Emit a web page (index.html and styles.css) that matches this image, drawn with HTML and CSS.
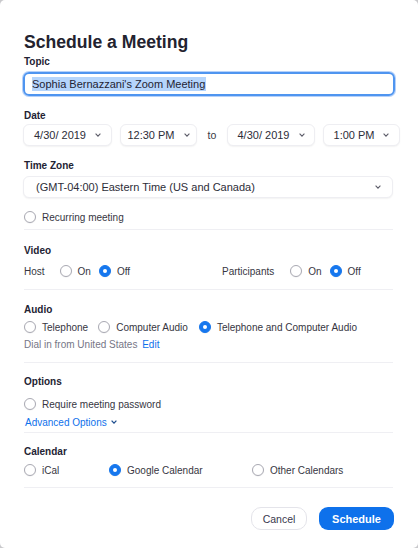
FILE: index.html
```html
<!DOCTYPE html>
<html>
<head>
<meta charset="utf-8">
<link rel="stylesheet" href="styles.css">
</head>
<body>
<div class="dialog">
  <h1 class="title">Schedule a Meeting</h1>

  <div class="label label-topic">Topic</div>
  <div class="text-input"><span class="selected">Sophia Bernazzani's Zoom Meeting</span></div>

  <div class="label label-date">Date</div>
  <div class="date-row">
    <div class="select w89"><span>4/30/ 2019</span><svg class="chev" width="6" height="4" viewBox="0 0 6 4"><path d="M0.6 0.7 L3 3.1 L5.4 0.7" /></svg></div>
    <div class="select w77"><span>12:30 PM</span><svg class="chev" width="6" height="4" viewBox="0 0 6 4"><path d="M0.6 0.7 L3 3.1 L5.4 0.7" /></svg></div>
    <div class="to">to</div>
    <div class="select w88"><span>4/30/ 2019</span><svg class="chev" width="6" height="4" viewBox="0 0 6 4"><path d="M0.6 0.7 L3 3.1 L5.4 0.7" /></svg></div>
    <div class="select w77"><span>1:00 PM</span><svg class="chev" width="6" height="4" viewBox="0 0 6 4"><path d="M0.6 0.7 L3 3.1 L5.4 0.7" /></svg></div>
  </div>

  <div class="label label-tz">Time Zone</div>
  <div class="select tz"><span>(GMT-04:00) Eastern Time (US and Canada)</span><svg class="chev" width="6" height="4" viewBox="0 0 6 4"><path d="M0.6 0.7 L3 3.1 L5.4 0.7" /></svg></div>

  <div class="row row-recurring"><span class="radio"></span><span class="opt-text">Recurring meeting</span></div>
  <div class="divider d1"></div>

  <div class="label label-video">Video</div>
  <div class="row video-row">
    <div class="vgroup">
      <span class="vlabel">Host</span>
      <span class="radio"></span><span class="opt-text">On</span>
      <span class="radio checked gap8"></span><span class="opt-text">Off</span>
    </div>
    <div class="vgroup">
      <span class="vlabel vlabel-wide">Participants</span>
      <span class="radio"></span><span class="opt-text">On</span>
      <span class="radio checked gap8"></span><span class="opt-text">Off</span>
    </div>
  </div>
  <div class="divider d2"></div>

  <div class="label label-audio">Audio</div>
  <div class="row audio-row">
    <span class="radio"></span><span class="opt-text">Telephone</span>
    <span class="radio gap10"></span><span class="opt-text">Computer Audio</span>
    <span class="radio checked gap11"></span><span class="opt-text">Telephone and Computer Audio</span>
  </div>
  <div class="dial">Dial in from United States <span class="link">Edit</span></div>
  <div class="divider d3"></div>

  <div class="label label-options">Options</div>
  <div class="row row-password"><span class="radio"></span><span class="opt-text">Require meeting password</span></div>
  <div class="advanced"><span class="link">Advanced Options</span><svg class="adv-chev" width="6" height="4" viewBox="0 0 6 4"><path d="M0.6 0.6 L3 3.1 L5.4 0.6" /></svg></div>
  <div class="divider d4"></div>

  <div class="label label-calendar">Calendar</div>
  <div class="row cal-row">
    <div class="cal-opt"><span class="radio"></span><span class="opt-text">iCal</span></div>
    <div class="cal-opt"><span class="radio checked"></span><span class="opt-text">Google Calendar</span></div>
    <div class="cal-opt"><span class="radio"></span><span class="opt-text">Other Calendars</span></div>
  </div>
  <div class="divider d5"></div>

  <div class="buttons">
    <button class="btn btn-cancel">Cancel</button>
    <button class="btn btn-primary">Schedule</button>
  </div>
</div>
</body>
</html>
```

FILE: styles.css
```css
html, body {
  margin: 0;
  padding: 0;
  background: #c9c9cc;
}

body {
  width: 418px;
  height: 548px;
  overflow: hidden;
  font-family: "Liberation Sans", Arial, Helvetica, sans-serif;
  color: #393945;
}

.dialog {
  box-sizing: border-box;
  width: 418px;
  height: 548px;
  background: #ffffff;
  border-radius: 5px;
  padding: 32px 25px 0 24px;
}

.title {
  margin: 0;
  font-size: 17.6px;
  line-height: 20px;
  font-weight: bold;
  color: #23232f;
}

.label {
  font-size: 10px;
  line-height: 12px;
  font-weight: bold;
  color: #232333;
}

.label-topic { margin-top: 4px; }
.label-date { margin-top: 14px; }
.label-tz { margin-top: 14px; }
.label-video { margin-top: 15px; }
.label-audio { margin-top: 14px; }
.label-options { margin-top: 13px; }
.label-calendar { margin-top: 13px; }

.text-input {
  box-sizing: border-box;
  margin: 4px -2px 0 -1px;
  height: 24px;
  border: 2px solid #4f95f0;
  border-radius: 6px;
  box-shadow: 0 0 0 1px rgba(120, 172, 245, 0.55);
  padding: 3px 0 0 7px;
  font-size: 11px;
  line-height: 14px;
  color: #232333;
}

.selected {
  display: inline-block;
  height: 14px;
  background: #b5d5fc;
  padding-right: 1px;
}

.date-row {
  display: flex;
  align-items: center;
  margin: 2px 0 0 -1px;
  height: 22px;
}

.select {
  box-sizing: border-box;
  height: 22px;
  display: flex;
  align-items: center;
  justify-content: center;
  gap: 9px;
  background: #fff;
  border: 1px solid #eeeef2;
  border-radius: 6px;
  box-shadow: 0 1px 1.5px rgba(0, 0, 0, 0.05);
  font-size: 11px;
  color: #2d2d38;
  white-space: nowrap;
}

.date-row > * { flex: none; }

.w89 { width: 89px; }
.w88 { width: 88px; }
.w77 { width: 77px; margin-left: 8px; }

.to {
  width: 30px;
  text-align: center;
  font-size: 10.5px;
  color: #393945;
}

.chev path {
  fill: none;
  stroke: #5c5c68;
  stroke-width: 1.1;
}

.select.tz {
  margin: 4px 0 0 -1px;
  justify-content: space-between;
  padding: 0 11px 0 12px;
}

.row {
  display: flex;
  align-items: center;
  height: 14px;
  font-size: 10px;
  color: #363642;
  white-space: nowrap;
}

.radio {
  box-sizing: border-box;
  width: 12px;
  height: 12px;
  border-radius: 50%;
  border: 1px solid #a9a9b3;
  background: #fff;
  flex: none;
  position: relative;
  box-shadow: 0 0.5px 1px rgba(0, 0, 0, 0.08);
}

.radio.checked {
  background: #1677ee;
  border-color: #1677ee;
}

.radio.checked::after {
  content: "";
  position: absolute;
  left: 3px;
  top: 3px;
  width: 4px;
  height: 4px;
  border-radius: 50%;
  background: #fff;
}

.opt-text {
  margin-left: 6px;
}

.gap8 { margin-left: 8px; }
.gap10 { margin-left: 10px; }
.gap11 { margin-left: 11px; }

.row-recurring { margin-top: 12px; }

.divider {
  height: 1px;
  background: #efeff3;
}

.d1 { margin-top: 5px; }
.d2 { margin-top: 11px; }
.d3 { margin-top: 11px; }
.d4 { margin-top: 4px; }
.d5 { margin-top: 10px; }

.video-row {
  margin-top: 7px;
  display: grid;
  grid-template-columns: 198px auto;
}

.vgroup {
  display: flex;
  align-items: center;
}

.vlabel {
  margin-right: 15px;
  font-size: 10px;
}

.vlabel-wide {
  margin-right: 16px;
}

.audio-row { margin-top: 4px; }

.dial {
  margin-top: 5px;
  font-size: 10px;
  line-height: 12px;
  color: #767686;
}

.link {
  color: #0e71eb;
  margin-left: 2px;
}

.row-password { margin-top: 9px; }

.advanced {
  margin-top: 5px;
  display: flex;
  align-items: center;
  height: 12px;
  font-size: 10px;
  padding-left: 1px;
}

.advanced .link { margin-left: 0; }

.adv-chev {
  margin-left: 4px;
}

.adv-chev path {
  fill: none;
  stroke: #1f4f8f;
  stroke-width: 1.3;
}

.cal-row {
  margin-top: 5px;
  display: grid;
  grid-template-columns: 85px 143px auto;
}

.cal-opt {
  display: flex;
  align-items: center;
}

.buttons {
  margin: 19px -1px 0 0;
  display: flex;
  justify-content: flex-end;
  gap: 12px;
}

.btn {
  box-sizing: border-box;
  height: 23px;
  font-family: "Liberation Sans", Arial, Helvetica, sans-serif;
  padding: 0;
  cursor: pointer;
}

.btn-cancel {
  width: 56px;
  background: #fff;
  border: 1px solid #e4e4ea;
  border-radius: 10px;
  font-size: 10.5px;
  color: #39394d;
}

.btn-primary {
  width: 75px;
  background: #0e71eb;
  border: none;
  border-radius: 9px;
  font-size: 11px;
  font-weight: bold;
  color: #fff;
}
```
